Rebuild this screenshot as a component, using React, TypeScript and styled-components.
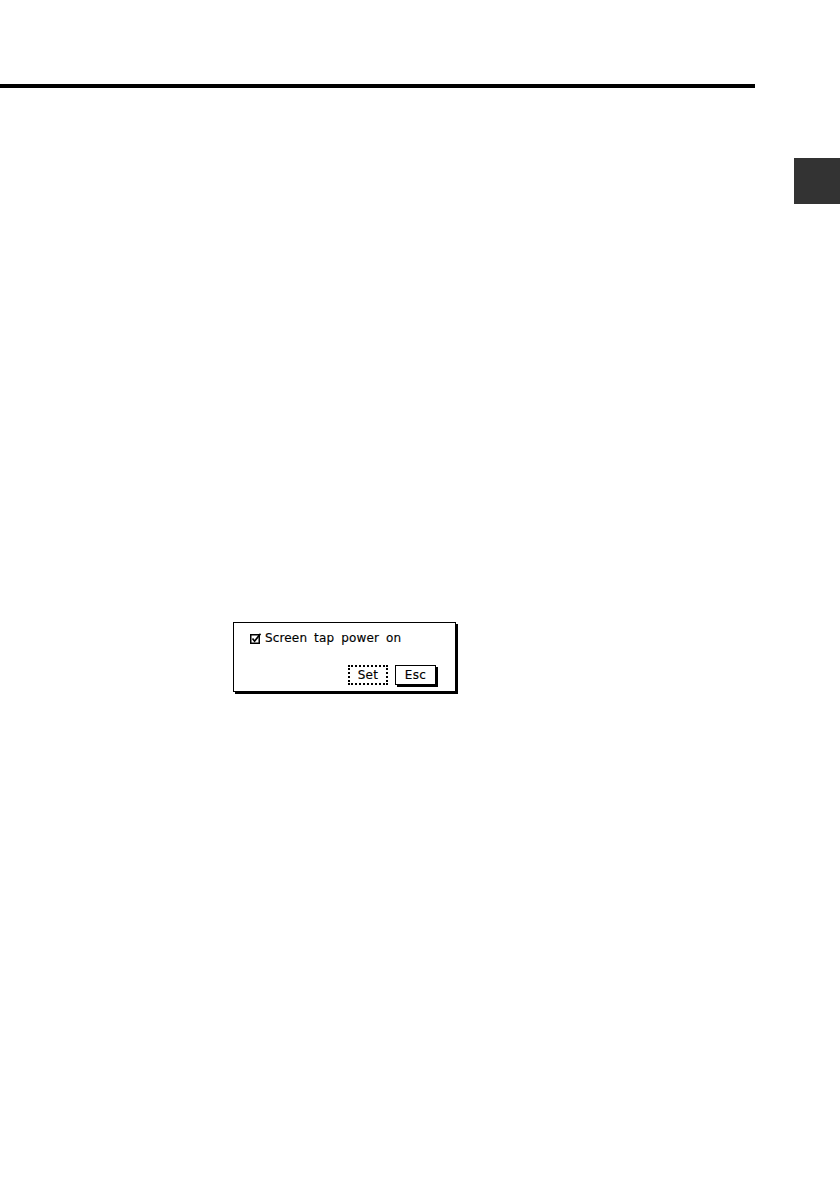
import * as React from 'react';
import styled, { createGlobalStyle } from 'styled-components';

const GlobalStyle = createGlobalStyle`
	html, body {
		margin: 0;
		padding: 0;
		background: #fff;
	}
	body {
		font-family: "Liberation Sans", Arial, sans-serif;
	}
`;

const Page = styled.div`
	width: 840px;
	height: 1190px;
	background: #fff;
	padding-top: 84px;
	box-sizing: border-box;
	overflow: hidden;
`;

const Rule = styled.div`
	width: 755px;
	height: 4px;
	background: #000;
`;

const TabRow = styled.div`
	display: flex;
	justify-content: flex-end;
	margin-top: 70px;
`;

const IndexTab = styled.div`
	width: 46px;
	height: 46px;
	background: #333;
`;

const DialogArea = styled.div`
	padding: 418px 0 0 233px;
`;

const Dialog = styled.div`
	width: 223px;
	height: 70px;
	border: 1px solid #000;
	box-shadow: 2px 2px 0 #000;
	display: flex;
	flex-direction: column;
	justify-content: space-between;
	padding: 9px 19px 6px 16px;
	box-sizing: border-box;
	font-family: "DejaVu Sans", "Liberation Sans", sans-serif;
	font-size: 12px;
	color: #000;
`;

const CheckRow = styled.label`
	display: flex;
	align-items: center;
	gap: 3px;
	letter-spacing: 0.15px;
	word-spacing: 3px;
	line-height: 13px;
	-webkit-text-stroke: 0.15px #000;
`;

const Box = styled.svg`
	width: 12px;
	height: 11px;
	flex: none;
`;

const Buttons = styled.div`
	display: flex;
	justify-content: flex-end;
	align-items: flex-start;
	gap: 7px;
`;

const Button = styled.div<{ $focused?: boolean }>`
	display: flex;
	align-items: center;
	justify-content: center;
	border: ${(p) => (p.$focused ? '2px dotted #000' : '1px solid #000')};
	box-shadow: ${(p) => (p.$focused ? 'none' : '2px 2px 0 #000')};
	box-sizing: border-box;
	width: ${(p) => (p.$focused ? '40px' : '41px')};
	height: 20px;
	letter-spacing: 0.3px;
	font-size: 12px;
	-webkit-text-stroke: 0.15px #000;
`;

const CheckIcon = () => (
	<Box viewBox="0 0 12 11">
		<rect x="0.75" y="1.75" width="8.5" height="8.5" fill="none" stroke="#000" strokeWidth="1.5" />
		<path d="M2.5 5.5 L4.6 8.2 L10.5 0.8" fill="none" stroke="#000" strokeWidth="1.7" />
	</Box>
);

const App = (): React.ReactElement => {
	return (
		<Page>
			<GlobalStyle />
			<Rule />
			<TabRow>
				<IndexTab />
			</TabRow>
			<DialogArea>
				<Dialog>
					<CheckRow>
						<CheckIcon />
						Screen tap power on
					</CheckRow>
					<Buttons>
						<Button $focused>Set</Button>
						<Button>Esc</Button>
					</Buttons>
				</Dialog>
			</DialogArea>
		</Page>
	);
};

export default App;
